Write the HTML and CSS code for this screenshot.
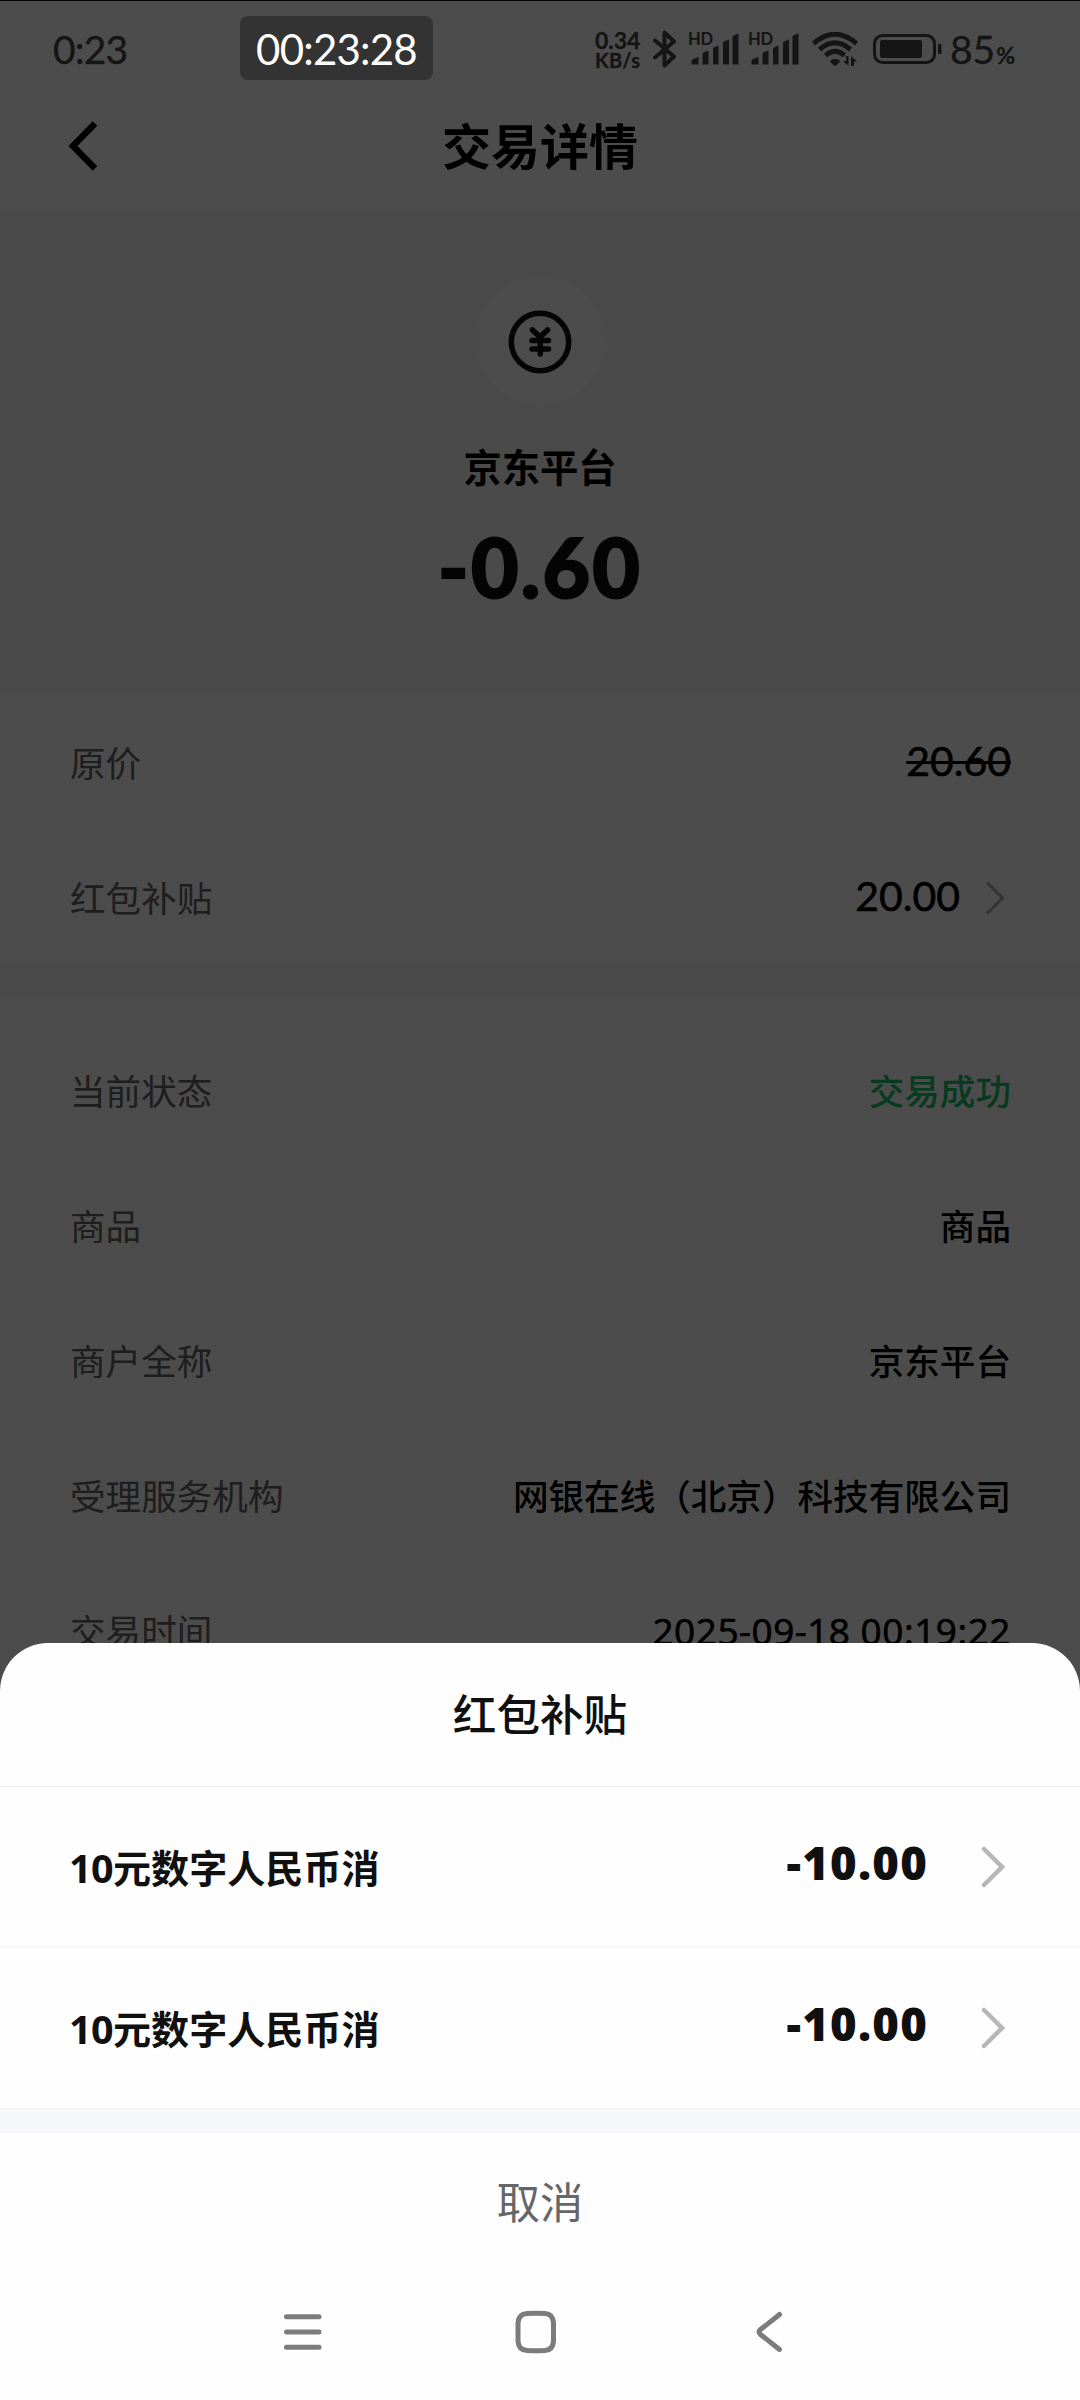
FILE: index.html
```html
<!DOCTYPE html>
<html lang="zh-CN">
<head>
<meta charset="utf-8">
<title>交易详情</title>
<link rel="stylesheet" href="styles.css">
</head>
<body>
<div class="screen">
  <div class="page">
    <div class="status-bar">
      <span class="clock">0:23</span>
      <div class="indicators">
        <div class="net-speed"><span class="rate">0.34</span><span class="unit">KB/s</span></div>
        <svg class="bluetooth" viewBox="0 0 24 40"><path d="M2 11.500L21 27.500L11.500 36.500V3.500L21 12.500L2 28.500"/></svg>
        <div class="signal">
          <span class="hd">HD</span>
          <svg class="bars" viewBox="0 0 50 32"><path d="M2.500 31.500v-4q0-1.500 7-3.500v7.500zM13.500 31.500v-11q0-1 6-3v14zM24 31.500v-16q0-1 5.500-3v19zM34 31.500v-22q0-1 6-3v25zM43.500 31.500v-28q0-1 6-3v31z"/></svg>
        </div>
        <div class="signal">
          <span class="hd">HD</span>
          <svg class="bars" viewBox="0 0 50 32"><path d="M2.500 31.500v-4q0-1.500 7-3.500v7.500zM13.500 31.500v-11q0-1 6-3v14zM24 31.500v-16q0-1 5.500-3v19zM34 31.500v-22q0-1 6-3v25zM43.500 31.500v-28q0-1 6-3v31z"/></svg>
        </div>
        <svg class="wifi" viewBox="0 0 46 36">
          <path class="arc" d="M1.500 11.500Q23-7 44.500 11.500M7.500 17.500Q23 4 38.500 17.500M13.500 23.500Q23 15 32.500 23.500"/>
          <path class="fill" d="M18 29q5-4.500 10 0q0 1.500-5 5q-5-3.500-5-5z"/>
          <path class="fill" d="M31 29h3v-5h2.500v10zM39 34v-10l6 5.500h-3V34z"/>
        </svg>
        <svg class="battery" viewBox="0 0 70 32">
          <rect class="case" x="2.500" y="2.500" width="60" height="27" rx="8"/>
          <rect class="fill" x="8" y="7" width="42" height="18" rx="2"/>
          <rect class="fill" x="66" y="11" width="3.500" height="10" rx="1"/>
        </svg>
        <div class="level"><span>85</span><span class="percent">%</span></div>
      </div>
    </div>

    <header class="nav-header">
      <svg class="back" viewBox="0 0 32 52"><path d="M28 3.500L6 26L28 48.500"/></svg>
      <h1 class="title">交易详情</h1>
    </header>

    <section class="hero">
      <div class="badge">
        <svg class="yuan" viewBox="0 0 64 64"><circle cx="32" cy="32" r="28.700"/><path d="M24.500 20L32 27L39.500 20M24 30.500H40.500M24 39H40.500M32.300 27V44"/></svg>
      </div>
      <div class="merchant">京东平台</div>
      <div class="total">-0.60</div>
    </section>

    <section class="group price-group">
      <div class="row"><span class="label">原价</span><span class="value number struck">20.60</span></div>
      <div class="row">
        <span class="label">红包补贴</span>
        <span class="value number subsidy">20.00</span>
        <svg class="chevron" viewBox="0 0 20 36"><path d="M2 2.500L17.500 18L2 33.500"/></svg>
      </div>
    </section>

    <section class="group detail-group">
      <div class="row"><span class="label">当前状态</span><span class="value success">交易成功</span></div>
      <div class="row"><span class="label">商品</span><span class="value">商品</span></div>
      <div class="row"><span class="label">商户全称</span><span class="value">京东平台</span></div>
      <div class="row"><span class="label">受理服务机构</span><span class="value">网银在线（北京）科技有限公司</span></div>
      <div class="row"><span class="label">交易时间</span><span class="value time">2025-09-18 00:19:22</span></div>
    </section>
  </div>

  <div class="mask"></div>
  <div class="timer">00:23:28</div>

  <div class="sheet">
    <h2 class="sheet-title">红包补贴</h2>
    <div class="coupon">
      <span class="name"><span class="ten">10</span>元数字人民币消</span>
      <span class="amount">-10.00</span>
      <svg class="arrow" viewBox="0 0 24 42"><path d="M3 3L21 21L3 39"/></svg>
    </div>
    <div class="coupon">
      <span class="name"><span class="ten">10</span>元数字人民币消</span>
      <span class="amount">-10.00</span>
      <svg class="arrow" viewBox="0 0 24 42"><path d="M3 3L21 21L3 39"/></svg>
    </div>
    <div class="cancel">取消</div>
    <nav class="system-nav">
      <svg viewBox="0 0 44 44"><path d="M5.500 6.700H38M5.500 22H38M5.500 37.300H38" /></svg>
      <svg viewBox="0 0 44 44"><path d="M13 3.500Q22 3 31 3.500Q39 4 39.500 13V31Q39 40 31 40.500Q22 41 13 40.500Q4.500 40 4 31V13Q4.500 4 13 3.500Z"/></svg>
      <svg viewBox="0 0 44 44"><path d="M32.500 4.500L13.500 19.500Q10.500 22 13.500 24.500L32.500 39.500"/></svg>
    </nav>
  </div>
</div>
</body>
</html>
```
FILE: styles.css
```css
* { box-sizing: border-box; }
body { margin: 0; background: #000; }
h1, h2 { margin: 0; }
svg { display: block; flex: none; fill: none; }

.screen {
  position: relative;
  width: 1080px;
  height: 2400px;
  overflow: hidden;
  font-family: "Open Sans", "Noto Sans CJK SC", sans-serif;
  line-height: 1;
  white-space: nowrap;
}
.page { height: 2400px; background: #f7f7f8; }

/* Status bar */
.status-bar {
  display: flex;
  justify-content: space-between;
  height: 92px;
  padding: 6px 65px 0 53px;
  align-items: center;
  background: #fefefe;
  color: #464646;
  font-family: Lato, sans-serif;
}
.clock { font-size: 39px; letter-spacing: -0.8px; -webkit-text-stroke: 0.3px #464646; }
.indicators { display: flex; align-items: center; }
.net-speed {
  display: flex;
  flex-direction: column;
  width: 58px;
  padding-top: 2px;
  font-weight: 700;
  -webkit-text-stroke: 0.3px #464646;
}
.rate { font-size: 23px; line-height: 19px; }
.unit { font-size: 20px; line-height: 20px; letter-spacing: 0.3px; }
.bluetooth { width: 24px; height: 40px; margin-right: 12px; stroke: #464646; stroke-width: 4; stroke-linejoin: round; stroke-linecap: round; }
.signal { position: relative; width: 60px; }
.hd { position: absolute; left: -1px; top: 0; font-size: 16.500px; line-height: 12px; font-weight: 700; }
.bars { width: 50px; height: 32px; fill: #464646; }
.wifi { width: 46px; height: 36px; margin: 1px 14px 0 3px; }
.arc { stroke: #464646; stroke-width: 5; }
.fill { fill: #464646; }
.battery { width: 70px; height: 32px; margin-right: 8px; }
.case { stroke: #464646; stroke-width: 3; }
.level { display: flex; align-items: baseline; font-size: 39px; -webkit-text-stroke: 0.3px #464646; }
.percent { margin-left: 1px; font-size: 23px; font-weight: 700; }

/* Header */
.nav-header {
  display: grid;
  grid-template-columns: 1fr auto 1fr;
  align-items: center;
  height: 117px;
  padding: 0 67px 9px;
  background: #fefefe;
}
.back { width: 32px; height: 52px; stroke: #000; stroke-width: 6.500; }
.title { font-size: 49px; line-height: 72px; font-weight: 700; }

/* Summary */
.hero {
  display: flex;
  flex-direction: column;
  align-items: center;
  height: 483px;
  padding-top: 67px;
}
.badge {
  display: flex;
  align-items: center;
  justify-content: center;
  width: 129px;
  height: 129px;
  border-radius: 50%;
  background: #fefefe;
}
.yuan { width: 64px; height: 64px; margin-top: 2px; stroke: #101010; stroke-width: 5.500; stroke-linecap: round; }
.merchant { margin-top: 34px; font-size: 38.300px; line-height: 56px; font-weight: 600; }
.total {
  margin-top: 26px;
  font-family: Lato, sans-serif;
  font-size: 82px;
  line-height: 90px;
  font-weight: 900;
  letter-spacing: 2.200px;
  color: #101010;
  -webkit-text-stroke: 2px #101010;
}

/* Detail rows */
.group { padding: 0 69px 0 70px; background: #fefefe; }
.price-group { height: 272px; padding-top: 3px; }
.detail-group { height: 760px; margin-top: 32px; padding-top: 27px; }
.row { display: flex; align-items: center; height: 135px; font-size: 35.600px; line-height: 52px; }
.label { color: #666; }
.value { margin-left: auto; font-weight: 500; color: #000; }
.success { color: #1cc46c; }
.number { padding-bottom: 4px; font-family: Lato, sans-serif; font-size: 41px; font-weight: 400; -webkit-text-stroke: 0.6px #000; }
.struck { text-decoration: line-through; text-decoration-thickness: 3px; }
.subsidy { padding-right: 25px; }
.chevron { width: 20px; height: 36px; margin: 0 6px 0 0; stroke: #b0b0b0; stroke-width: 3; }
.time { font-size: 37px; letter-spacing: 0.5px; -webkit-text-stroke: 0.7px #000; }

.mask { position: absolute; inset: 0; background: rgba(0, 0, 0, 0.7); border-top: 1px solid #000; }
.timer {
  position: absolute;
  left: 240px;
  top: 16px;
  width: 193px;
  height: 64px;
  border-radius: 8px;
  background: #333;
  color: #fff;
  font-family: Lato, sans-serif;
  font-size: 42px;
  line-height: 66px;
  letter-spacing: -0.8px;
  text-align: center;
}

/* Bottom sheet */
.sheet {
  position: absolute;
  left: 0;
  right: 0;
  bottom: 0;
  height: 757px;
  border-radius: 48px 48px 0 0;
  background: #fefefe;
  color: #101010;
}
.sheet-title {
  height: 144px;
  border-bottom: 1px solid #ededed;
  text-align: center;
  font-size: 43.600px;
  line-height: 143px;
  font-weight: 500;
}
.coupon {
  display: flex;
  align-items: center;
  height: 161px;
  padding: 0 75px 0 69px;
  border-bottom: 1px solid #f4f4f4;
}
.name { padding-top: 1px; font-size: 38.100px; line-height: 56px; font-weight: 600; }
.ten { font-size: 39.500px; font-weight: 700; letter-spacing: -0.6px; }
.amount { margin-left: auto; padding-bottom: 10px; font-size: 45.500px; line-height: 60px; font-weight: 800; letter-spacing: 1.2px; }
.arrow { width: 24px; height: 42px; margin-left: 53px; stroke: #b7b7b7; stroke-width: 4.500; stroke-linecap: round; }
.cancel {
  height: 162px;
  border-top: 24px solid #f6f7fa;
  text-align: center;
  font-size: 43.300px;
  line-height: 139px;
  color: #666;
}
.system-nav {
  display: flex;
  justify-content: space-between;
  padding: 39px 289px 0 281px;
}
.system-nav svg { width: 44px; height: 44px; stroke: #7c7c7c; stroke-width: 5; stroke-linecap: round; stroke-linejoin: round; }
```
